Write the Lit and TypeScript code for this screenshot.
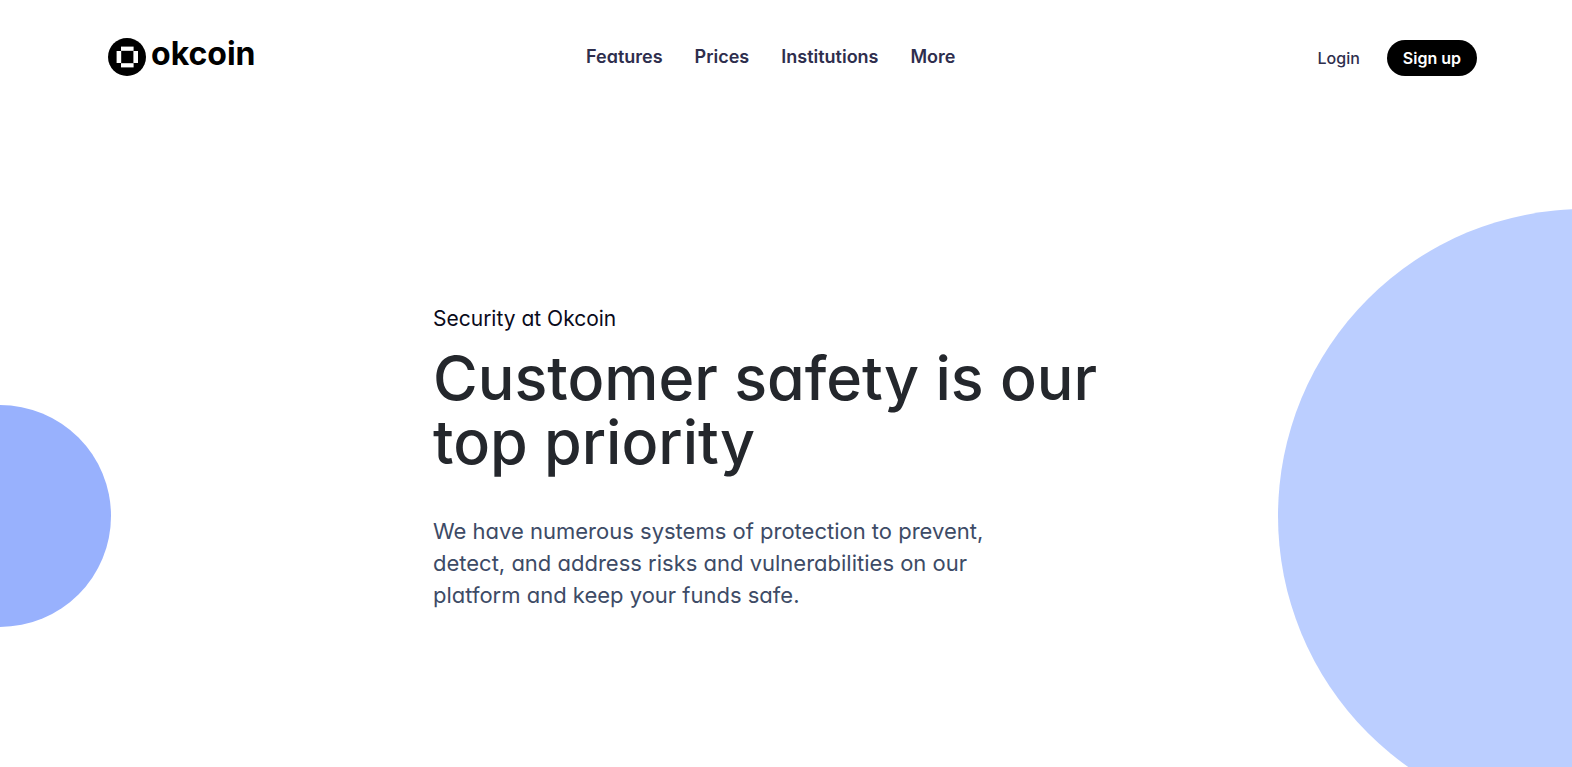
import { LitElement, html, css } from "lit";
import { customElement } from "lit/decorators.js";

@customElement("site-header")
class SiteHeader extends LitElement {
  static styles = css`
    :host {
      display: block;
    }
    .bar {
      display: grid;
      grid-template-columns: 11fr auto 12fr;
      align-items: center;
      padding: 37px 95px 0 108px;
    }
    .brand {
      display: flex;
      align-items: center;
      gap: 5px;
      color: #000;
      text-decoration: none;
    }
    .mark {
      width: 38px;
      height: 38px;
      flex: none;
    }
    .word {
      font-size: 32px;
      line-height: 34px;
      font-weight: 700;
      padding-bottom: 6px;
    }
    .links {
      display: flex;
      gap: 32px;
    }
    .link {
      font-size: 18px;
      line-height: 24px;
      font-weight: 600;
      color: #2e2e4d;
      text-decoration: none;
    }
    .account {
      display: flex;
      align-items: center;
      justify-content: flex-end;
      gap: 27px;
      padding-top: 2px;
    }
    .login {
      font-size: 16px;
      line-height: 24px;
      font-weight: 500;
      color: #2e2e4d;
      text-decoration: none;
    }
    .signup {
      font: inherit;
      font-feature-settings: inherit;
      font-size: 16px;
      line-height: 24px;
      font-weight: 600;
      color: #fff;
      background: #000;
      border: 0;
      border-radius: 18px;
      padding: 6px 16px;
      cursor: pointer;
    }
  `;

  private links = ["Features", "Prices", "Institutions", "More"];

  render() {
    return html`
      <header class="bar">
        <a class="brand" href="#" aria-label="okcoin">
          <svg class="mark" viewBox="0 0 38 38" aria-hidden="true">
            <circle cx="19" cy="19" r="19" fill="#000" />
            <g fill="#fff">
              <rect x="13" y="8.6" width="12.6" height="4.2" />
              <rect x="13" y="25.2" width="12.6" height="4.2" />
              <rect x="8.6" y="13" width="4.6" height="12" />
              <rect x="25.4" y="13" width="4.6" height="12" />
            </g>
          </svg>
          <span class="word">okcoin</span>
        </a>
        <nav class="links" aria-label="Main">
          ${this.links.map((label) => html`<a class="link" href="#">${label}</a>`)}
        </nav>
        <div class="account">
          <a class="login" href="#">Login</a>
          <button class="signup" type="button">Sign up</button>
        </div>
      </header>
    `;
  }
}

@customElement("security-hero")
class SecurityHero extends LitElement {
  static styles = css`
    :host {
      display: block;
    }
    .content {
      box-sizing: border-box;
      max-width: 706px;
      margin: 0 auto;
    }
    .eyebrow {
      margin: 0;
      font-size: 21px;
      line-height: 32px;
      color: #0a0a1a;
    }
    .title {
      margin: 11px 0 41px;
      font-size: 61px;
      line-height: 64px;
      font-weight: 500;
      color: #24272c;
    }
    .lead {
      margin: 0;
      max-width: 590px;
      font-size: 22px;
      line-height: 32px;
      color: #3d4b66;
    }
  `;

  render() {
    return html`
      <section class="content">
        <p class="eyebrow">Security at Okcoin</p>
        <h1 class="title">Customer safety is our top priority</h1>
        <p class="lead">
          We have numerous systems of protection to prevent, detect, and address
          risks and vulnerabilities on our platform and keep your funds safe.
        </p>
      </section>
    `;
  }
}

@customElement("app-root")
class AppRoot extends LitElement {
  static styles = css`
    :host {
      display: block;
      position: relative;
      overflow: hidden;
      min-height: 100vh;
      background: #fff;
      font-family: Inter, "Open Sans", sans-serif;
      font-feature-settings: "cv11";
    }
    .hero {
      display: block;
      position: relative;
      padding: 226px 24px 156px;
    }
    .disc {
      position: absolute;
      border-radius: 50%;
    }
    .disc-left {
      width: 222px;
      height: 222px;
      left: -111px;
      top: 405px;
      background: #98b1fd;
    }
    .disc-right {
      width: 614px;
      height: 614px;
      right: -320px;
      top: 209px;
      background: #bbceff;
    }
  `;

  render() {
    return html`
      <div class="disc disc-left"></div>
      <div class="disc disc-right"></div>
      <site-header></site-header>
      <security-hero class="hero"></security-hero>
    `;
  }
}
